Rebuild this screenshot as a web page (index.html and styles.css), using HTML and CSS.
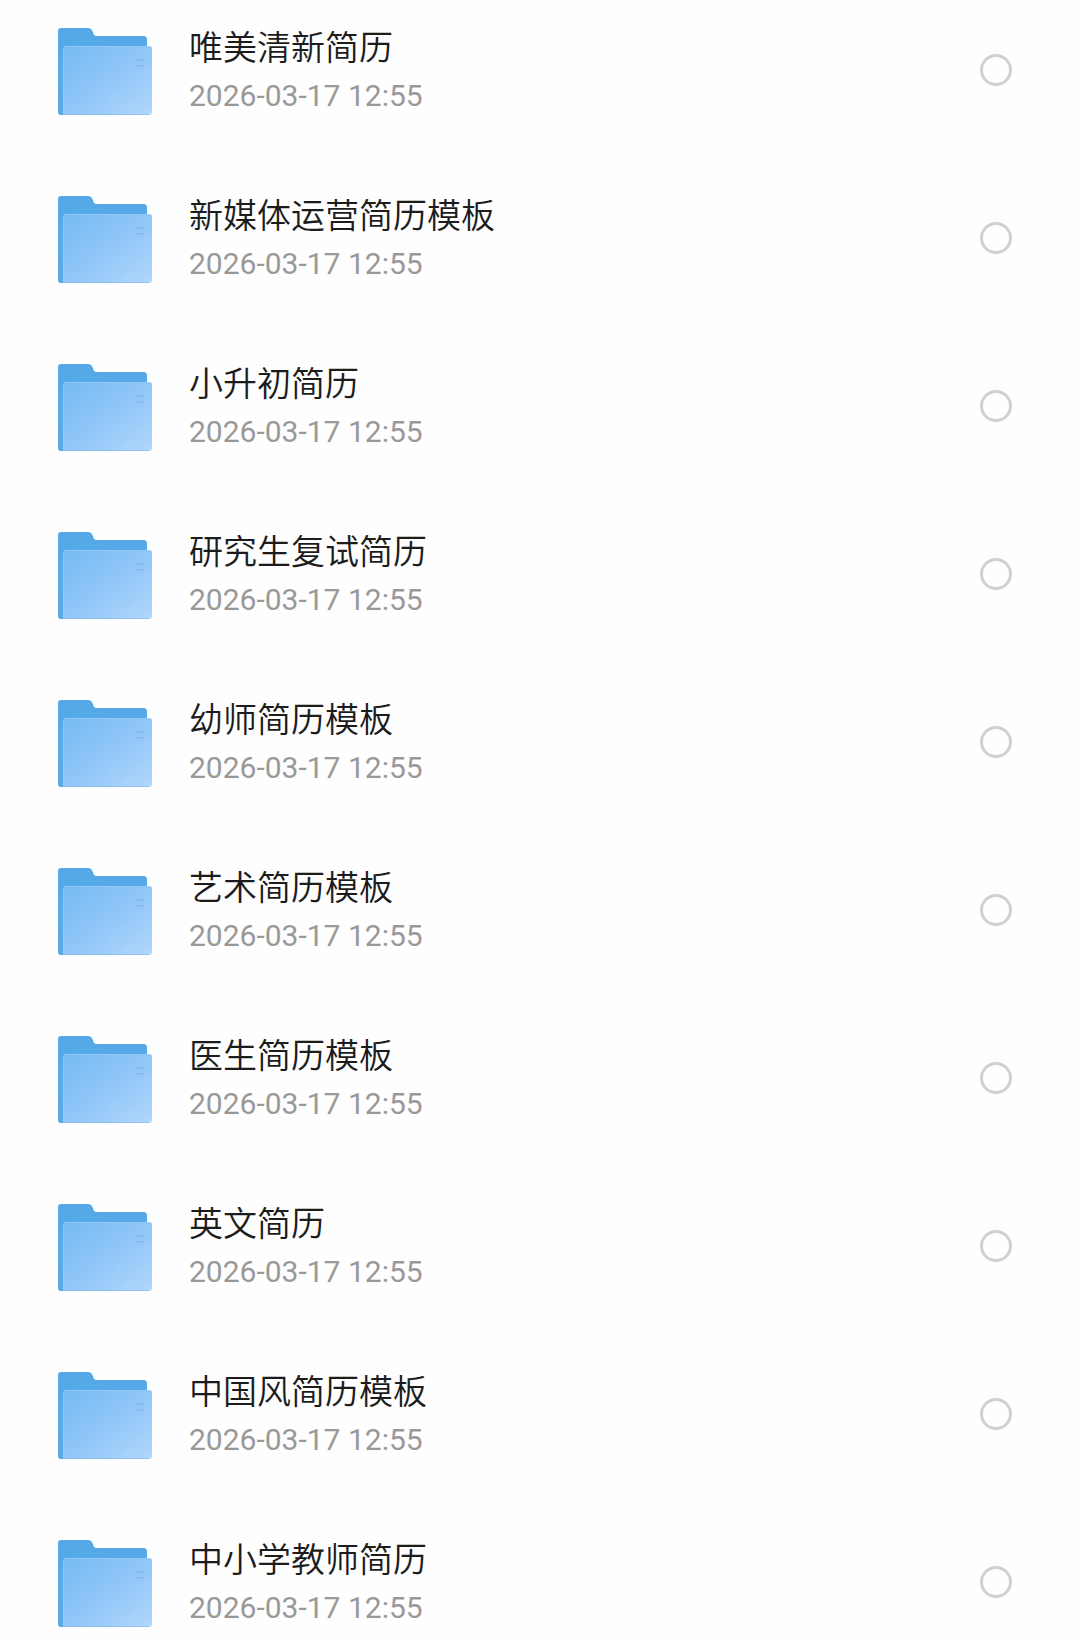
FILE: index.html
```
<!DOCTYPE html>
<html lang="zh-CN">
<head>
  <meta charset="UTF-8">
  <meta name="viewport" content="width=device-width, initial-scale=1.0">
  <title>简历模板</title>
  <link rel="stylesheet" href="styles.css">
</head>
<body>
  <!-- shared folder icon -->
  <svg class="defs" width="0" height="0" aria-hidden="true">
    <defs>
      <linearGradient id="back" x1="0" y1="0" x2="0" y2="1">
        <stop offset="0" stop-color="#55a9e9"/>
        <stop offset="1" stop-color="#5caae6"/>
      </linearGradient>
      <linearGradient id="front" x1="0" y1="0" x2="1" y2="1">
        <stop offset="0" stop-color="#76baf3"/>
        <stop offset="0.5" stop-color="#90c6f8"/>
        <stop offset="1" stop-color="#b2d7fb"/>
      </linearGradient>
      <symbol id="folder" viewBox="0 -4 94 92">
        <path fill="url(#back)" d="M3 0H30Q33 0 34.500 3L36 7Q37 8 39 8H86Q89 8 89 12V60L20 87H3Q0 87 0 84V3Q0 0 3 0Z"/>
        <path fill="url(#front)" d="M8 18H91Q94 18 94 21V84Q94 87 91 87H5V21Q5 18 8 18Z"/>
        <path fill="none" stroke="#9bd0f8" stroke-opacity="0.6" d="M5.500 86V21Q5.500 18.500 8 18.500H91"/>
        <path fill="none" stroke="#78b3ea" stroke-opacity="0.5" d="M8 86.500H91"/>
        <path fill="none" stroke="#7fb6e8" stroke-width="2" stroke-opacity="0.6" d="M78 32H86M78 38H86"/>
      </symbol>
    </defs>
  </svg>

  <main>
    <ul class="file-list">
      <li><label class="file">
        <svg class="folder" aria-hidden="true"><use href="#folder"/></svg>
        <span class="info"><span class="name">唯美清新简历</span><time class="date">2026-03-17 12:55</time></span>
        <input class="check" type="checkbox">
      </label></li>
      <li><label class="file">
        <svg class="folder" aria-hidden="true"><use href="#folder"/></svg>
        <span class="info"><span class="name">新媒体运营简历模板</span><time class="date">2026-03-17 12:55</time></span>
        <input class="check" type="checkbox">
      </label></li>
      <li><label class="file">
        <svg class="folder" aria-hidden="true"><use href="#folder"/></svg>
        <span class="info"><span class="name">小升初简历</span><time class="date">2026-03-17 12:55</time></span>
        <input class="check" type="checkbox">
      </label></li>
      <li><label class="file">
        <svg class="folder" aria-hidden="true"><use href="#folder"/></svg>
        <span class="info"><span class="name">研究生复试简历</span><time class="date">2026-03-17 12:55</time></span>
        <input class="check" type="checkbox">
      </label></li>
      <li><label class="file">
        <svg class="folder" aria-hidden="true"><use href="#folder"/></svg>
        <span class="info"><span class="name">幼师简历模板</span><time class="date">2026-03-17 12:55</time></span>
        <input class="check" type="checkbox">
      </label></li>
      <li><label class="file">
        <svg class="folder" aria-hidden="true"><use href="#folder"/></svg>
        <span class="info"><span class="name">艺术简历模板</span><time class="date">2026-03-17 12:55</time></span>
        <input class="check" type="checkbox">
      </label></li>
      <li><label class="file">
        <svg class="folder" aria-hidden="true"><use href="#folder"/></svg>
        <span class="info"><span class="name">医生简历模板</span><time class="date">2026-03-17 12:55</time></span>
        <input class="check" type="checkbox">
      </label></li>
      <li><label class="file">
        <svg class="folder" aria-hidden="true"><use href="#folder"/></svg>
        <span class="info"><span class="name">英文简历</span><time class="date">2026-03-17 12:55</time></span>
        <input class="check" type="checkbox">
      </label></li>
      <li><label class="file">
        <svg class="folder" aria-hidden="true"><use href="#folder"/></svg>
        <span class="info"><span class="name">中国风简历模板</span><time class="date">2026-03-17 12:55</time></span>
        <input class="check" type="checkbox">
      </label></li>
      <li><label class="file">
        <svg class="folder" aria-hidden="true"><use href="#folder"/></svg>
        <span class="info"><span class="name">中小学教师简历</span><time class="date">2026-03-17 12:55</time></span>
        <input class="check" type="checkbox">
      </label></li>
    </ul>
  </main>
</body>
</html>
```
FILE: styles.css
```
body {
  margin: 0;
  background: #fefefe;
  font-family: "Noto Sans CJK SC", sans-serif;
}
.defs {
  display: block;
}
.file-list {
  display: flex;
  flex-direction: column;
  gap: 68px;
  margin: 0;
  padding: 20px 68px 0 58px;
  list-style: none;
}
.file {
  display: flex;
  align-items: center;
  gap: 37px;
  cursor: pointer;
}
.folder {
  width: 94px;
  height: 92px;
  flex: none;
}
.info {
  flex: 1;
  display: flex;
  flex-direction: column;
}
.name {
  font-size: 34px;
  font-weight: 350;
  line-height: 52px;
  color: #1c1c1c;
}
.date {
  font-family: Roboto, sans-serif;
  font-size: 30px;
  line-height: 48px;
  color: #999;
}
.check {
  appearance: none;
  flex: none;
  box-sizing: border-box;
  width: 32px;
  height: 32px;
  margin: 0;
  border: 3px solid #d0d0d0;
  border-radius: 50%;
  cursor: pointer;
}
.check:checked {
  border-color: #55a9e9;
  background: #55a9e9;
}
```
